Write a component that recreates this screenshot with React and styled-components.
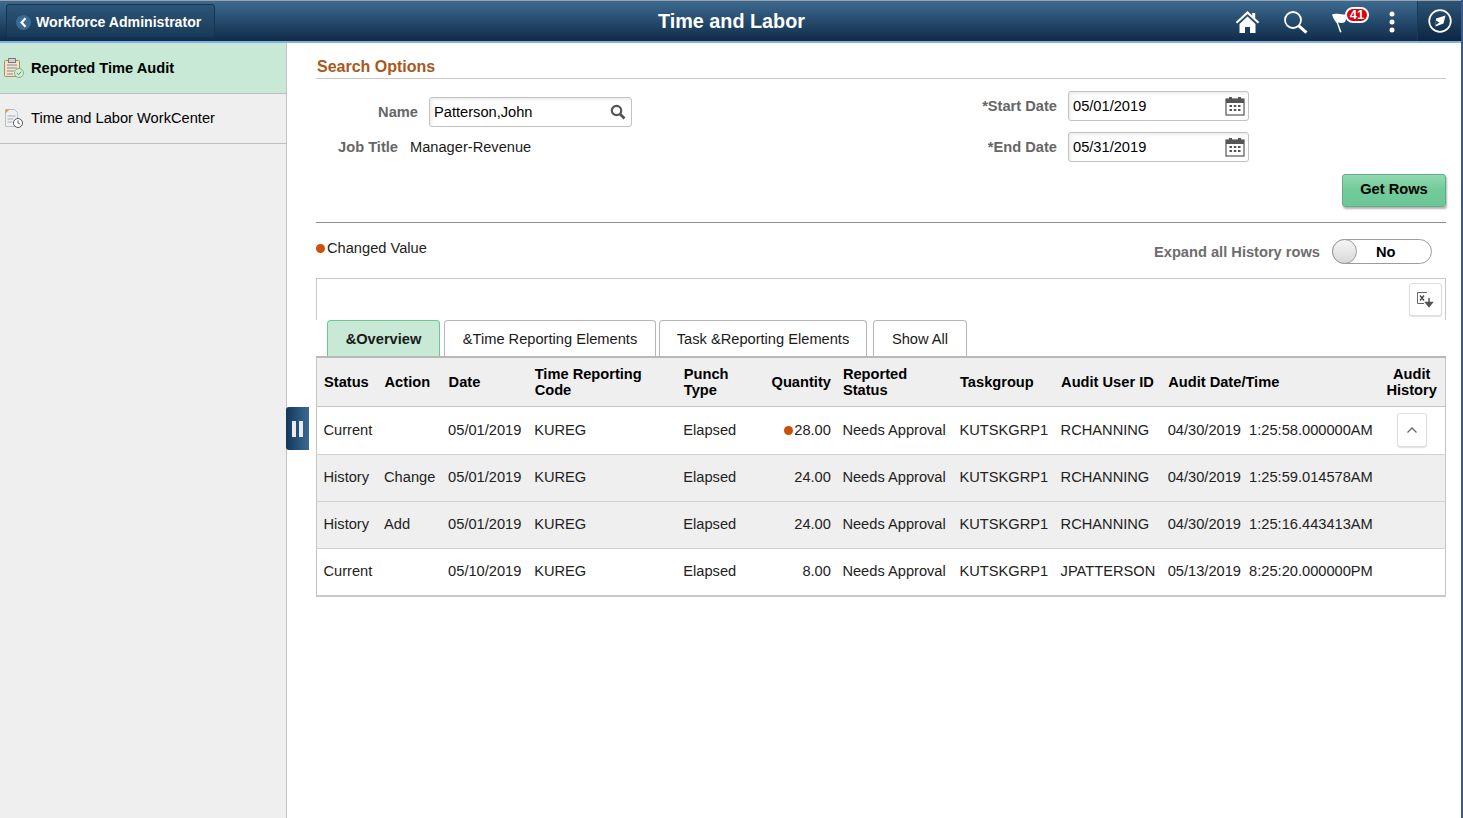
import React from "react";
import styled, { createGlobalStyle } from "styled-components";

const Global = createGlobalStyle`
  html, body { margin: 0; padding: 0; background: #fff; }
  body { font-family: "Liberation Sans", Arial, sans-serif; font-size: 14.65px; color: #000; overflow: hidden; }
  * { box-sizing: border-box; }
`;

const Page = styled.div`
  position: relative;
  width: 1463px; height: 818px; display: flex; flex-direction: column;
  border-right: 2px solid #3d5a8a; overflow: hidden;
`;
const Banner = styled.header`
  height: 43px; flex: none; display: flex; align-items: stretch; padding-top: 1px;
  border-top: 1px solid #9aa3ad; border-bottom: 2px solid #85aede;
  background: linear-gradient(#3d6a90, #0f2c49);
  margin-right: -2px;
  color: #fff;
`;
const BackButton = styled.button`
  margin: 2px 0 3px 6px; width: 209px; height: 34px; padding: 2px 0 0 9px; display: flex; align-items: center; gap: 5px;
  font: bold 14.1px "Liberation Sans", sans-serif; color: #fff; border-radius: 3px;
  background: linear-gradient(#2d5577, #183a58); border: 1px solid #163350;
`;
const BackDisc = styled.span`
  width: 15px; height: 15px; border-radius: 50%; background: #3a6b93; display: flex; align-items: center; justify-content: center;
`;
const BannerTitle = styled.h1`
  margin: 0; position: absolute; left: 0; width: 1463px; top: 9px; text-align: center; font-size: 19.8px; line-height: 24px; font-weight: bold; pointer-events: none;
`;
const BannerIcons = styled.div`
  margin-left: auto; display: flex; align-items: stretch;
`;
const BannerIcon = styled.div`
  position: relative; width: ${p => p.$w}px; padding-right: ${p => p.$pr ?? 0}px; display: flex; align-items: center; justify-content: center;
`;
const NavBox = styled(BannerIcon)`
  background: rgba(5, 25, 45, .28); border-left: 1px solid #1c3b58; margin-top: -1px;
`;
const Badge = styled.span`
  position: absolute; left: 24px; top: 5px; width: 24px; height: 16px; border-radius: 8px; background: #d8000c;
  border: 2px solid #fff; color: #fff; font-size: 13px; font-weight: bold; line-height: 12px; text-align: center;
`;

const Body = styled.div`
  flex: 1; display: flex; min-height: 0;
`;
const Sidebar = styled.nav`
  width: 287px; flex: none; background: #efefef; border-right: 1px solid #c4c4c4;
`;
const NavItem = styled.div`
  display: flex; align-items: center; gap: 7px; padding: 0 0 ${p => p.$pb ?? 0}px 4px; height: ${p => p.$h}px;
  border-bottom: 1px solid #bfbfbf; font-weight: ${p => p.$active ? "bold" : "normal"};
  background: ${p => p.$active ? "#c8e9d6" : "transparent"};
`;
const Main = styled.main`
  flex: 1; min-width: 0; padding: 14px 15px 0 29px; 
`;
const SectionTitle = styled.h2`
  margin: 0; padding-left: 1px; height: 22px; font-size: 16px; line-height: 19px; font-weight: bold; color: #a8581b; border-bottom: 1px solid #c9c9c9;
`;
const FormArea = styled.div`
  display: flex; height: 95px;
`;
const LeftForm = styled.div`
  width: 316px; padding-top: 18px; position: relative;
`;
const RightForm = styled.div`
  margin-left: 1px; padding-top: 12px; display: flex; flex-direction: column; gap: 11px;
`;
const Row = styled.div`
  display: flex; align-items: center;
`;
const Label = styled.label`
  font-weight: bold; color: #666; text-align: right; width: ${p => p.$w}px; flex: none;
`;
const InputBox = styled.div`
  width: ${p => p.$w}px; height: 30px; margin-left: 11px; padding: 0 3px 0 4px; display: flex; align-items: center; justify-content: space-between;
  border: 1px solid #c2c2c2; border-radius: 3px; background: #fff; box-shadow: inset 2px 2px 3px rgba(0,0,0,.07);
`;
const JobRow = styled(Row)`
  margin-top: 9px; height: 22px;
`;
const JobValue = styled.span`
  margin-left: 12px; color: #1a1a1a;
`;
const ActionRow = styled.div`
  display: flex; justify-content: flex-end; height: 48px;
`;
const GetRows = styled.button`
  width: 104px; height: 33px; padding: 0 0 3px; font: bold 14.65px "Liberation Sans", sans-serif; color: #000;
  border: 1px solid #5fae85; border-radius: 3px; background: linear-gradient(#93dab2, #73cb9a 45%, #6cc695);
  box-shadow: 1px 2px 2px rgba(0,0,0,.3);
`;
const Rule = styled.hr`
  margin: 0; border: 0; border-top: 1px solid #8c8c8c; height: 1px;
`;
const LegendRow = styled.div`
  height: 55px; display: flex; justify-content: space-between; padding-right: 14px;
`;
const Legend = styled.div`
  padding-top: 16px; line-height: 18px; display: flex; align-items: flex-start; color: #222;
`;
const Dot = styled.span`
  display: inline-block; width: 9px; height: 9px; border-radius: 50%; background: #cd4f08; margin-right: ${p => p.$mr ?? 2}px;
  position: relative; top: ${p => p.$top}px;
`;
const ToggleWrap = styled.div`
  display: flex; align-items: center; gap: 12px; padding-top: 4px; height: 46px; margin-top: 3px;
`;
const ToggleLabel = styled.span`
  font-weight: bold; color: #6d6d6d; padding-top: 2px;
`;
const Toggle = styled.div`
  width: 100px; height: 25px; border: 1px solid #9c9c9c; border-radius: 13px; background: #fff; position: relative; display: flex; align-items: center;
  font-weight: bold; padding: 1px 0 0 43px;
`;
const Knob = styled.span`
  position: absolute; left: -1px; top: -1px; width: 25px; height: 25px; border-radius: 50%;
  border: 1px solid #9c9c9c; background: linear-gradient(#f6f6f6, #d8d8d8);
`;
const ToolBox = styled.div`
  height: 42px; border: 1px solid #c9c9c9; border-bottom: 0; padding: 4px 3px 0 0; display: flex; justify-content: flex-end; align-items: flex-start;
`;
const IconBtn = styled.button`
  width: 33px; height: 33px; padding: 0 ${p => p.$pr ?? 0}px 0 0; background: #fff; border: 1px solid #dedede; border-radius: 3px; box-shadow: 0 1px 1px rgba(0,0,0,.12);
  display: flex; align-items: center; justify-content: center;
`;
const Tabs = styled.div`
  display: flex; padding-left: 11px; height: 36px; margin-top: 0;
`;
const Tab = styled.div`
  width: ${p => p.$w}px; margin-right: ${p => p.$mr}px; height: 37px; flex: none; text-align: center; line-height: 36px;
  border: 1px solid ${p => p.$active ? "#6fc695" : "#b5b5b5"}; border-bottom: 0; border-radius: 4px 4px 0 0;
  background: ${p => p.$active ? "#c8e9d6" : "#fff"}; font-weight: ${p => p.$active ? "bold" : "normal"};
  position: relative; z-index: 0; color: #1a1a1a;
`;
const GridTable = styled.table`
  position: relative; width: 1130px; border-collapse: collapse; table-layout: fixed; border: 1px solid #c4c4c4; border-top: 2px solid #b8b8b8; border-bottom: 2px solid #c9c9c9;
`;
const Th = styled.th`
  padding: 0 ${p => p.$pr ?? 0}px 0 ${p => p.$pl ?? 7}px; height: 49px; background: #efefef; font-weight: bold; line-height: 16px;
  text-align: ${p => p.$align || "left"}; border-bottom: 1px solid #c4c4c4; color: #000;
`;
const Td = styled.td`
  padding: 0 ${p => p.$pr ?? 0}px ${p => p.$pb ?? 0}px ${p => p.$pl ?? 6.5}px; height: ${p => p.$h}px; white-space: pre; color: #222;
  text-align: ${p => p.$align || "left"}; border-bottom: 1px solid #d0d0d0; background: ${p => p.$alt ? "#efefef" : "#fff"};
`;
const ChevBtn = styled(IconBtn)`
  width: 30px; height: 34px; margin: 0 auto; position: relative;
`;
const PauseTab = styled.div`
  position: absolute; left: 286px; top: 407px; width: 23px; height: 43px; border-radius: 3px 0 0 3px;
  background: linear-gradient(90deg, #13375a, #3a6b93); display: flex; align-items: center; justify-content: center; gap: 3px;
`;
const PauseBar = styled.span`
  width: 4px; height: 16px; background: #e9edf1;
`;
const FlagSvg = styled.svg`
  position: absolute; left: 11px; top: 10px;
`;

const BackIcon = () => (
  <svg width="9" height="11" viewBox="0 0 9 11"><path d="M6.5 1.2 2.6 5.5l3.9 4.3" fill="none" stroke="#fff" strokeWidth="2.2" /></svg>
);
const HomeIcon = () => (
  <svg width="25" height="24" viewBox="0 0 25 24" fill="#fff">
    <path d="M12.5 1 0.8 12l1.4 1.5L12.5 4l10.3 9.5 1.4-1.5-4-3.8V3h-3v2.4Z" />
    <path d="M4.5 14 12.5 6.6l8 7.4v9h-5.5v-6h-5v6H4.5Z" />
  </svg>
);
const SearchIcon = () => (
  <svg width="25" height="24" viewBox="0 0 25 24" fill="none" stroke="#fff">
    <circle cx="10" cy="10" r="8" strokeWidth="1.8" />
    <path d="M15.8 15.8 23.5 22.6" strokeWidth="3" />
  </svg>
);
const FlagIcon = () => (
  <FlagSvg width="20" height="22" viewBox="0 0 20 22" fill="#fff">
    <path d="M0 2.500C5 .5 9 3.500 16 2l-3 8c-3 1.500-5 1-7 .5l3.500 9.500-1.500.5L5 11.500C3 9 1 6 0 2.500Z" />
  </FlagSvg>
);
const Kebab = () => (
  <svg width="6" height="22" viewBox="0 0 6 22" fill="#fff"><circle cx="3" cy="3" r="2.500" /><circle cx="3" cy="11" r="2.500" /><circle cx="3" cy="19" r="2.500" /></svg>
);
const CompassIcon = () => (
  <svg width="24" height="24" viewBox="0 0 24 24">
    <circle cx="12" cy="12" r="10.800" fill="none" stroke="#fff" strokeWidth="1.700" />
    <path d="M17.500 6.500 8 9.500 7.500 17.500 15.500 14.500Z" fill="#fff" />
    <path d="M7.800 11.500 11.500 13.500 7.800 16Z" fill="#24445f" />
  </svg>
);
const AuditIcon = () => (
  <svg width="20" height="20" viewBox="0 0 20 20">
    <rect x="0.500" y="2.500" width="15" height="16" rx="1" fill="#efe3cf" stroke="#b58d5a" />
    <rect x="4.500" y="0.500" width="7" height="4" fill="#cfcfcf" stroke="#7c7c7c" />
    <path d="M3 7h10M3 10h10M3 13h7M3 16h6" stroke="#8b8b8b" />
    <circle cx="15" cy="15" r="4.500" fill="#d5edd9" stroke="#77b48a" />
    <path d="m12.800 15 1.700 1.700 2.700-3" fill="none" stroke="#4e8e63" />
  </svg>
);
const WorkIcon = () => (
  <svg width="20" height="20" viewBox="0 0 20 20">
    <path d="M1.500 1.500h9l3 3v14h-12Z" fill="#eef0f2" stroke="#b9bec4" />
    <path d="M1.500 1.500h4l-4 4Z" fill="#e39a3a" />
    <path d="M3.500 8h8M3.500 11h6M3.500 14h5" stroke="#a7adb3" />
    <circle cx="14" cy="15" r="4.500" fill="#fff" stroke="#555" />
    <path d="M14 12.500V15l1.800 1" fill="none" stroke="#555" />
  </svg>
);
const MagnifierSvg = styled.svg`
  margin-right: 2px;
`;
const Magnifier = () => (
  <MagnifierSvg width="16" height="16" viewBox="0 0 16 16" fill="none" stroke="#555">
    <circle cx="6.500" cy="6.500" r="4.700" strokeWidth="2.200" />
    <path d="m10 10 4.500 4.500" strokeWidth="2.800" />
  </MagnifierSvg>
);
const Calendar = () => (
  <svg width="20" height="20" viewBox="0 0 20 20">
    <rect x="1" y="3" width="18" height="16" fill="#fff" stroke="#555" strokeWidth="1.200" />
    <rect x="1" y="3" width="18" height="4" fill="#555" />
    <path d="M4 1h3v3H4zM13 1h3v3h-3z" fill="#555" />
    <path d="M4.500 9h2.500v2H4.500zM8.800 9h2.500v2H8.800zM13 9h2.500v2H13zM4.500 13h2.500v2H4.500zM8.800 13h2.500v2H8.800zM13 13h2.500v2H13z" fill="#555" />
  </svg>
);
const ExportIcon = () => (
  <svg width="18" height="18" viewBox="0 0 18 18" fill="none">
    <path d="M11 1.500H1.500v11H8" stroke="#666" />
    <path d="m4 4.500 4 5M8 4.500l-4 5" stroke="#444" strokeWidth="1.300" />
    <path d="M13 7v6M9.800 11.500h6.400L13 15.500Z" stroke="#555" fill="#555" strokeWidth="1.500" />
  </svg>
);
const Chevron = () => (
  <svg width="12" height="8" viewBox="0 0 12 8"><path d="m1.500 6.500 4.500-4.500 4.500 4.500" fill="none" stroke="#666" strokeWidth="1.300" /></svg>
);

const COLS = [61, 64, 86, 149, 83, 76, 117, 101, 107, 217, 67];
const ROWS = [
  { h: 48, pb: 0, status: "Current", action: "", date: "05/01/2019", qty: "28.00", changed: true, user: "RCHANNING", dt: "04/30/2019  1:25:58.000000AM", btn: true },
  { h: 47, pb: 2, alt: true, status: "History", action: "Change", date: "05/01/2019", qty: "24.00", user: "RCHANNING", dt: "04/30/2019  1:25:59.014578AM" },
  { h: 47, pb: 2, alt: true, status: "History", action: "Add", date: "05/01/2019", qty: "24.00", user: "RCHANNING", dt: "04/30/2019  1:25:16.443413AM" },
  { h: 48, pb: 1, status: "Current", action: "", date: "05/10/2019", qty: "8.00", user: "JPATTERSON", dt: "05/13/2019  8:25:20.000000PM" },
];

export default function App() {
  return (
    <Page>
      <Global />
      <Banner>
        <BackButton><BackDisc><BackIcon /></BackDisc>Workforce Administrator</BackButton>
        <BannerTitle>Time and Labor</BannerTitle>
        <BannerIcons>
          <BannerIcon $w={48} $pr={3}><HomeIcon /></BannerIcon>
          <BannerIcon $w={48} $pr={3}><SearchIcon /></BannerIcon>
          <BannerIcon $w={48}><FlagIcon /><Badge>41</Badge></BannerIcon>
          <BannerIcon $w={48} $pr={2}><Kebab /></BannerIcon>
          <NavBox $w={46} $pr={1}><CompassIcon /></NavBox>
        </BannerIcons>
      </Banner>
      <Body>
        <Sidebar>
          <NavItem $active $h={51}><AuditIcon />Reported Time Audit</NavItem>
          <NavItem $h={50} $pb={2}><WorkIcon />Time and Labor WorkCenter</NavItem>
        </Sidebar>
        <Main>
          <SectionTitle>Search Options</SectionTitle>
          <FormArea>
            <LeftForm>
              <Row>
                <Label $w={102}>Name</Label>
                <InputBox $w={203}>Patterson,John<Magnifier /></InputBox>
              </Row>
              <JobRow>
                <Label $w={82}>Job Title</Label>
                <JobValue>Manager-Revenue</JobValue>
              </JobRow>
            </LeftForm>
            <RightForm>
              <Row>
                <Label $w={424}>*Start Date</Label>
                <InputBox $w={181}>05/01/2019<Calendar /></InputBox>
              </Row>
              <Row>
                <Label $w={424}>*End Date</Label>
                <InputBox $w={181}>05/31/2019<Calendar /></InputBox>
              </Row>
            </RightForm>
          </FormArea>
          <ActionRow><GetRows>Get Rows</GetRows></ActionRow>
          <Rule />
          <LegendRow>
            <Legend><Dot $top={5} />Changed Value</Legend>
            <ToggleWrap>
              <ToggleLabel>Expand all History rows</ToggleLabel>
              <Toggle><Knob />No</Toggle>
            </ToggleWrap>
          </LegendRow>
          <ToolBox><IconBtn $pr={2}><ExportIcon /></IconBtn></ToolBox>
          <Tabs>
            <Tab $active $w={113} $mr={4}>&amp;Overview</Tab>
            <Tab $w={212} $mr={3}>&amp;Time Reporting Elements</Tab>
            <Tab $w={208} $mr={6}>Task &amp;Reporting Elements</Tab>
            <Tab $w={94} $mr={0}>Show All</Tab>
          </Tabs>
          <GridTable>
            <colgroup>{COLS.map((w, i) => <col key={i} style={{ width: w }} />)}</colgroup>
            <thead>
              <tr>
                <Th>Status</Th>
                <Th>Action</Th>
                <Th>Date</Th>
                <Th>Time Reporting<br />Code</Th>
                <Th>Punch<br />Type</Th>
                <Th $align="right" $pr={5}>Quantity</Th>
                <Th>Reported<br />Status</Th>
                <Th>Taskgroup</Th>
                <Th>Audit User ID</Th>
                <Th>Audit Date/Time</Th>
                <Th $align="center" $pl={0}>Audit<br />History</Th>
              </tr>
            </thead>
            <tbody>
              {ROWS.map((r, i) => (
                <tr key={i}>
                  <Td $h={r.h} $pb={r.pb} $alt={r.alt}>{r.status}</Td>
                  <Td $pb={r.pb} $alt={r.alt}>{r.action}</Td>
                  <Td $pb={r.pb} $alt={r.alt}>{r.date}</Td>
                  <Td $pb={r.pb} $alt={r.alt}>KUREG</Td>
                  <Td $pb={r.pb} $alt={r.alt}>Elapsed</Td>
                  <Td $pb={r.pb} $alt={r.alt} $align="right" $pr={5}>{r.changed && <Dot $top={0} $mr={1} />}{r.qty}</Td>
                  <Td $pb={r.pb} $alt={r.alt}>Needs Approval</Td>
                  <Td $pb={r.pb} $alt={r.alt}>KUTSKGRP1</Td>
                  <Td $pb={r.pb} $alt={r.alt}>{r.user}</Td>
                  <Td $pb={r.pb} $alt={r.alt}>{r.dt}</Td>
                  <Td $pb={r.pb} $alt={r.alt} $pl={0}>{r.btn && <ChevBtn><Chevron /></ChevBtn>}</Td>
                </tr>
              ))}
            </tbody>
          </GridTable>
        </Main>
      </Body>
      <PauseTab><PauseBar /><PauseBar /></PauseTab>
    </Page>
  );
}
